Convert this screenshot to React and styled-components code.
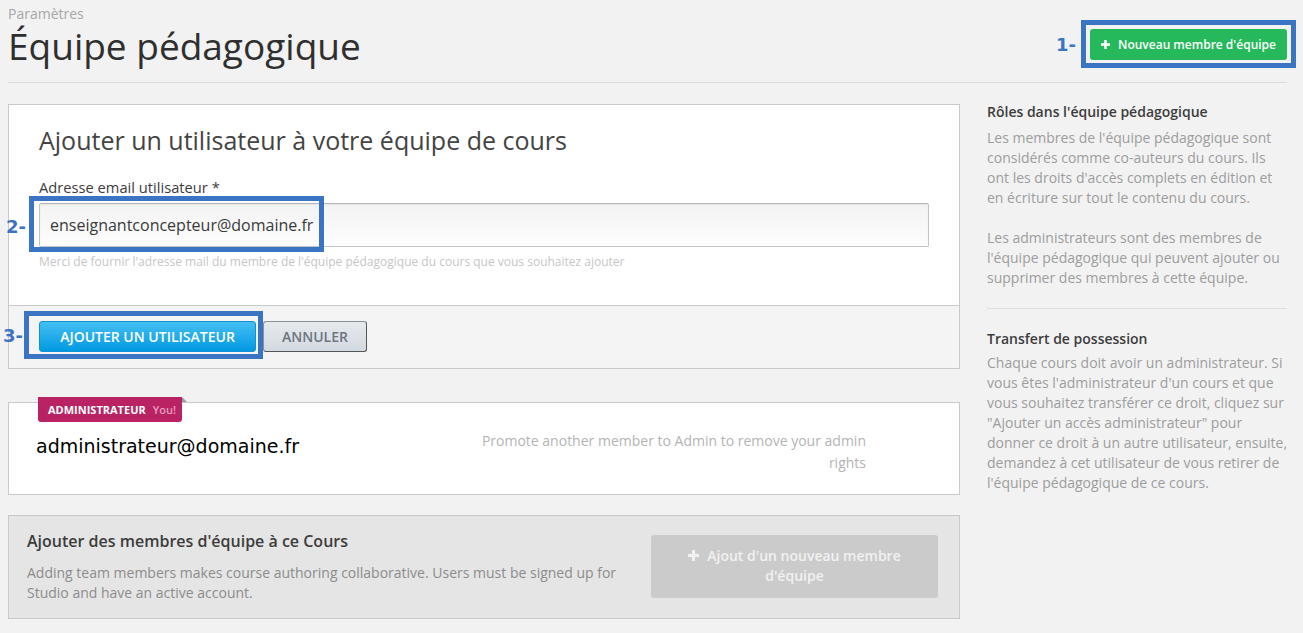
import React from "react";
import styled, { createGlobalStyle } from "styled-components";

const GlobalStyle = createGlobalStyle`
  * { box-sizing: border-box; }
  body {
    margin: 0;
    background: #f2f2f2;
    font-family: "Open Sans", "Noto Sans", sans-serif;
    color: #3c3c3c;
  }
`;

const ANNOT = "#3b74c3";

const Page = styled.div`
  padding: 5px 16px 0 8px;
  width: 1303px;
`;

const Header = styled.header`
  display: flex;
  justify-content: space-between;
  align-items: flex-start;
  padding-bottom: 16px;
  border-bottom: 1px solid #dcdcdc;
`;

const TitleBlock = styled.div`
  display: flex;
  flex-direction: column;
`;

const Subtitle = styled.span`
  font-size: 14px;
  line-height: 18px;
  color: #a7a7a7;
`;

const Title = styled.h1`
  margin: 2px 0 0;
  font-size: 37px;
  line-height: 41px;
  font-weight: 400;
  color: #2f2f2f;
`;

const Annotated = styled.div`
  position: relative;
  display: inline-flex;
  margin-top: ${(p) => p.$mt || 0}px;
`;

const AnnotBox = styled.div`
  position: absolute;
  left: ${(p) => p.$l}px;
  top: ${(p) => p.$t}px;
  width: ${(p) => p.$w}px;
  height: ${(p) => p.$h}px;
  border: 5px solid ${ANNOT};
  pointer-events: none;
`;

const AnnotLabel = styled.span`
  position: absolute;
  left: ${(p) => p.$l}px;
  top: ${(p) => p.$t}px;
  font-family: "DejaVu Sans", Verdana, sans-serif;
  font-weight: 700;
  font-size: 18px;
  line-height: 20px;
  color: ${ANNOT};
  white-space: nowrap;
`;

const GreenButton = styled.button`
  display: inline-flex;
  align-items: center;
  gap: 8px;
  height: 31px;
  padding: 0 11px;
  background: #25b95b;
  border: none;
  border-radius: 3px;
  color: #fff;
  font-family: "Open Sans", sans-serif;
  font-weight: 600;
  font-size: 12px;
`;

const PlusIcon = ({ size = 9, color = "#fff" }) => (
  <svg width={size} height={size} viewBox="0 0 10 10" aria-hidden="true">
    <rect x="3.6" y="0" width="2.8" height="10" fill={color} />
    <rect x="0" y="3.6" width="10" height="2.8" fill={color} />
  </svg>
);

const Content = styled.div`
  display: flex;
  gap: 27px;
  margin-top: 21px;
  align-items: flex-start;
`;

const Main = styled.main`
  width: 952px;
  display: flex;
  flex-direction: column;
`;

const Card = styled.section`
  position: relative;
  background: ${(p) => p.$bg || "#fff"};
  border: 1px solid #c9c9c9;
  margin-top: ${(p) => p.$mt || 0}px;
`;

const CardBody = styled.div`
  padding: 19px 30px 35px;
  display: flex;
  flex-direction: column;
`;

const CardTitle = styled.h2`
  margin: 0 0 21px;
  font-size: 25px;
  line-height: 32px;
  font-weight: 400;
  color: #444;
`;

const Label = styled.label`
  font-size: 14.7px;
  line-height: 20px;
  color: #3c3c3c;
  margin-bottom: 6px;
`;

const Input = styled.input`
  width: 891px;
  height: 44px;
  padding: 0 10px;
  border: 1px solid #c4c4c4;
  border-top-color: #b5b5b5;
  border-radius: 2px;
  background: linear-gradient(#f3f3f3, #fdfdfd);
  box-shadow: inset 0 1px 2px rgba(0, 0, 0, 0.06);
  font-family: "Open Sans", sans-serif;
  font-size: 16px;
  color: #3a3a3a;
  outline: none;
`;

const Help = styled.span`
  margin-top: 7px;
  font-size: 12px;
  line-height: 16px;
  color: #c6c6c6;
`;

const CardFooter = styled.div`
  display: flex;
  gap: 7px;
  padding: 15px 30px 16px;
  border-top: 1px solid #c9c9c9;
  background: #f4f4f4;
`;

const PrimaryButton = styled.button`
  width: 217px;
  height: 31px;
  border: 1px solid #0f92d6;
  border-radius: 3px;
  background: linear-gradient(#45bff3, #0199e1);
  color: #fff;
  font-family: "Open Sans", sans-serif;
  font-size: 14px;
  font-weight: 600;
  text-transform: uppercase;
  padding: 0;
`;

const SecondaryButton = styled.button`
  width: 104px;
  height: 31px;
  border: 1px solid #8a8f95;
  border-right-color: #555;
  border-bottom-color: #555;
  border-radius: 3px;
  background: linear-gradient(#e6eaef, #d3d9e0);
  color: #6c7580;
  font-family: "Open Sans", sans-serif;
  font-size: 14px;
  font-weight: 600;
  text-transform: uppercase;
  padding: 0;
`;

const MemberRow = styled.div`
  display: flex;
  justify-content: space-between;
  align-items: flex-start;
  padding: 27px 93px 20px 27px;
`;

const Badge = styled.div`
  position: absolute;
  left: 29px;
  top: -6px;
  width: 144px;
  height: 25px;
  display: flex;
  align-items: center;
  gap: 7px;
  padding-left: 10px;
  background: #b92364;
  border-radius: 0 0 3px 3px;
  font-size: 11px;
  font-weight: 700;
  color: #fff;
  &::after {
    content: "";
    position: absolute;
    left: 100%;
    top: 0;
    width: 0;
    height: 0;
    border-bottom: 5px solid #9c9c9c;
    border-right: 5px solid transparent;
  }
`;

const BadgeYou = styled.span`
  color: #e79bbd;
  font-weight: 600;
`;

const Email = styled.div`
  margin-top: 4px;
  font-family: "DejaVu Sans", Verdana, sans-serif;
  font-size: 19px;
  line-height: 24px;
  color: #000;
`;

const MemberNote = styled.p`
  margin: 0;
  width: 395px;
  text-align: right;
  font-size: 14px;
  line-height: 22px;
  color: #b4b4b4;
`;

const AddRow = styled.div`
  display: flex;
  align-items: center;
  justify-content: space-between;
  padding: 14px 21px 15px 18px;
`;

const AddText = styled.div`
  width: 610px;
  display: flex;
  flex-direction: column;
`;

const AddTitle = styled.h3`
  margin: 0 0 11px;
  font-size: 16px;
  line-height: 22px;
  font-weight: 600;
  color: #3c3c3c;
`;

const AddDesc = styled.p`
  margin: 0;
  font-size: 14px;
  line-height: 20px;
  color: #8c8c8c;
`;

const GhostButton = styled.button`
  width: 287px;
  padding: 11px 34px 12px;
  border: none;
  border-radius: 3px;
  background: #cbcbcb;
  color: #f1f1f1;
  font-family: "Open Sans", sans-serif;
  font-size: 14px;
  line-height: 20px;
  font-weight: 600;
  text-align: center;
  svg { margin-right: 8px; vertical-align: 0; }
`;

const Sidebar = styled.aside`
  width: 300px;
  margin-top: -2px;
`;

const SideSection = styled.div`
  padding-bottom: ${(p) => (p.$last ? 0 : 20)}px;
  margin-bottom: ${(p) => (p.$last ? 0 : 20)}px;
  border-bottom: ${(p) => (p.$last ? "none" : "1px solid #dedede")};
`;

const SideTitle = styled.h4`
  margin: 0 0 ${(p) => p.$gap}px;
  font-size: 14px;
  line-height: 20px;
  font-weight: 600;
  color: #3c3c3c;
`;

const SideText = styled.p`
  margin: 0 0 ${(p) => (p.$gap ? 20 : 0)}px;
  font-size: 14px;
  line-height: 20px;
  color: #9d9d9d;
`;

export default function App() {
  return (
    <>
      <GlobalStyle />
      <Page>
        <Header>
          <TitleBlock>
            <Subtitle>Paramètres</Subtitle>
            <Title>Équipe pédagogique</Title>
          </TitleBlock>
          <Annotated $mt={24}>
            <GreenButton>
              <PlusIcon size={9} />
              Nouveau membre d'équipe
            </GreenButton>
            <AnnotBox $l={-9} $t={-9} $w={215} $h={48} />
            <AnnotLabel $l={-34} $t={6}>1-</AnnotLabel>
          </Annotated>
        </Header>

        <Content>
          <Main>
            <Card>
              <CardBody>
                <CardTitle>Ajouter un utilisateur à votre équipe de cours</CardTitle>
                <Label>Adresse email utilisateur *</Label>
                <Annotated>
                  <Input defaultValue="enseignantconcepteur@domaine.fr" />
                  <AnnotBox $l={-10} $t={-7} $w={295} $h={56} />
                  <AnnotLabel $l={-33} $t={14}>2-</AnnotLabel>
                </Annotated>
                <Help>
                  Merci de fournir l'adresse mail du membre de l'équipe pédagogique du cours que vous souhaitez ajouter
                </Help>
              </CardBody>
              <CardFooter>
                <Annotated>
                  <PrimaryButton>Ajouter un utilisateur</PrimaryButton>
                  <AnnotBox $l={-15} $t={-10} $w={239} $h={48} />
                  <AnnotLabel $l={-36} $t={5}>3-</AnnotLabel>
                </Annotated>
                <SecondaryButton>Annuler</SecondaryButton>
              </CardFooter>
            </Card>

            <Card $mt={33}>
              <Badge>
                ADMINISTRATEUR <BadgeYou>You!</BadgeYou>
              </Badge>
              <MemberRow>
                <Email>administrateur@domaine.fr</Email>
                <MemberNote>Promote another member to Admin to remove your admin rights</MemberNote>
              </MemberRow>
            </Card>

            <Card $mt={20} $bg="#e5e5e5">
              <AddRow>
                <AddText>
                  <AddTitle>Ajouter des membres d'équipe à ce Cours</AddTitle>
                  <AddDesc>
                    Adding team members makes course authoring collaborative. Users must be signed up for Studio and have an active account.
                  </AddDesc>
                </AddText>
                <GhostButton>
                  <PlusIcon size={11} color="#f1f1f1" />
                  Ajout d'un nouveau membre d'équipe
                </GhostButton>
              </AddRow>
            </Card>
          </Main>

          <Sidebar>
            <SideSection>
              <SideTitle $gap={6}>Rôles dans l'équipe pédagogique</SideTitle>
              <SideText $gap>
                Les membres de l'équipe pédagogique sont considérés comme co-auteurs du cours. Ils ont les droits d'accès complets en édition et en écriture sur tout le contenu du cours.
              </SideText>
              <SideText>
                Les administrateurs sont des membres de l'équipe pédagogique qui peuvent ajouter ou supprimer des membres à cette équipe.
              </SideText>
            </SideSection>
            <SideSection $last>
              <SideTitle $gap={4}>Transfert de possession</SideTitle>
              <SideText>
                Chaque cours doit avoir un administrateur. Si vous êtes l'administrateur d'un cours et que vous souhaitez transférer ce droit, cliquez sur "Ajouter un accès administrateur" pour donner ce droit à un autre utilisateur, ensuite, demandez à cet utilisateur de vous retirer de l'équipe pédagogique de ce cours.
              </SideText>
            </SideSection>
          </Sidebar>
        </Content>
      </Page>
    </>
  );
}
